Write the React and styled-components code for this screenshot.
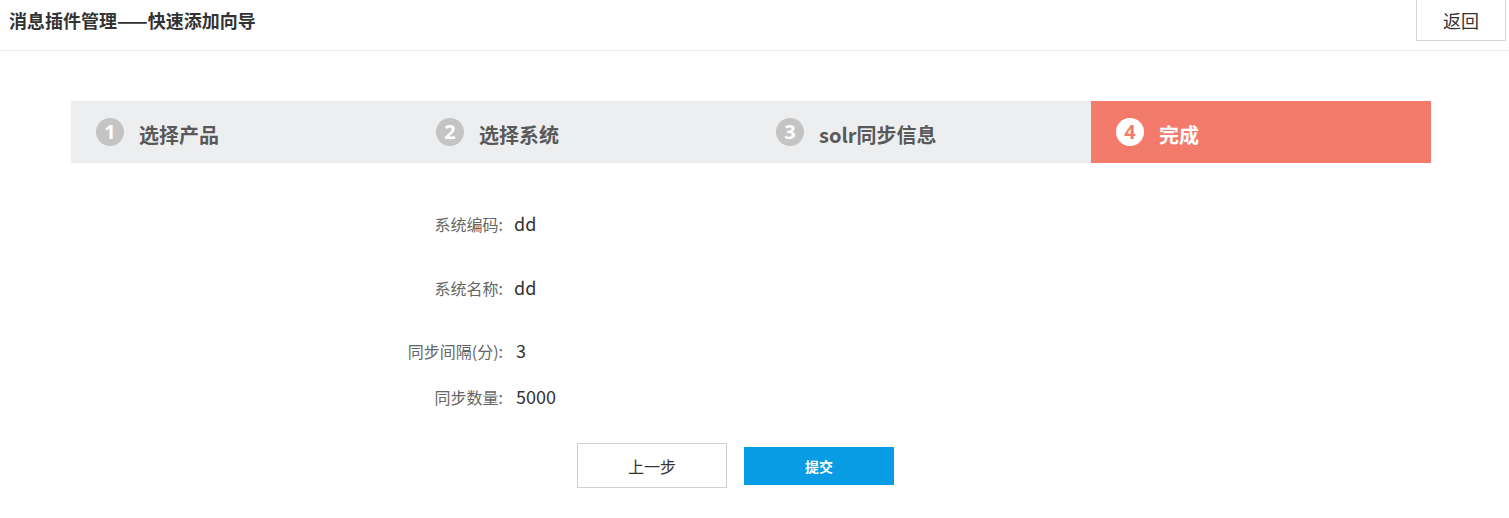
import React from 'react';
import styled, { createGlobalStyle } from 'styled-components';

const GlobalStyle = createGlobalStyle`
  * { box-sizing: border-box; }
  body {
    margin: 0;
    background: #fff;
    font-family: "Noto Sans CJK SC", "Noto Sans", sans-serif;
    color: #333;
  }
`;

const steps = [
  { num: 1, title: '选择产品' },
  { num: 2, title: '选择系统' },
  { num: 3, title: 'solr同步信息' },
  { num: 4, title: '完成', active: true },
];

const fields = [
  { label: '系统编码:', value: 'dd', after: 24 },
  { label: '系统名称:', value: 'dd', after: 23 },
  { label: '同步间隔(分):', value: '3', after: 6, shift: 2 },
  { label: '同步数量:', value: '5000', after: 0, shift: 2 },
];

const App = () => {
  return (
    <Page>
      <GlobalStyle />
      <Header>
        <Title>消息插件管理——快速添加向导</Title>
        <BackButton>返回</BackButton>
      </Header>
      <Content>
        <StepBar>
          {steps.map((s) => (
            <Step key={s.num} $active={s.active}>
              <StepNum $active={s.active}>{s.num}</StepNum>
              <StepTitle>{s.title}</StepTitle>
            </Step>
          ))}
        </StepBar>
        <Form>
          {fields.map((f) => (
            <Row key={f.label} $after={f.after}>
              <Label>{f.label}</Label>
              <Value $shift={f.shift || 0}>{f.value}</Value>
            </Row>
          ))}
        </Form>
        <Actions>
          <PrevButton>上一步</PrevButton>
          <SubmitButton>提交</SubmitButton>
        </Actions>
      </Content>
    </Page>
  );
};
export default App;

const Page = styled.div`
  width: 1509px;
  min-height: 518px;
`;

const Header = styled.div`
  height: 51px;
  display: flex;
  justify-content: space-between;
  align-items: flex-start;
  padding: 0 3px 0 9px;
  border-bottom: 1px solid #ebebeb;
`;

const Title = styled.h1`
  margin: 0;
  font-size: 18px;
  font-weight: 700;
  line-height: 41px;
  color: #333;
`;

const BackButton = styled.button`
  width: 90px;
  height: 42px;
  margin-top: -1px;
  background: #fff;
  border: 1px solid #d6d6d6;
  font-family: inherit;
  font-size: 18px;
  color: #333;
  cursor: pointer;
`;

const Content = styled.div`
  padding: 50px 78px 0 71px;
`;

const StepBar = styled.div`
  display: grid;
  grid-template-columns: repeat(4, 1fr);
  height: 62px;
  background: #edeef0;
`;

const Step = styled.div`
  display: flex;
  align-items: center;
  gap: 15px;
  padding-left: 25px;
  background: ${(p) => (p.$active ? '#f47a6c' : 'transparent')};
  color: ${(p) => (p.$active ? '#fff' : '#595959')};
`;

const StepNum = styled.span`
  width: 28px;
  height: 28px;
  border-radius: 50%;
  display: flex;
  align-items: center;
  justify-content: center;
  background: ${(p) => (p.$active ? '#fff' : '#c4c4c4')};
  color: ${(p) => (p.$active ? '#f47a6c' : '#fff')};
  font-family: "Open Sans", "Noto Sans", sans-serif;
  font-weight: 700;
  font-size: 20px;
  line-height: 1;
`;

const StepTitle = styled.span`
  font-size: 20px;
  font-weight: 700;
  line-height: 1;
  margin-top: 6px;
`;

const Form = styled.div`
  margin-top: 41px;
`;

const Row = styled.div`
  display: grid;
  grid-template-columns: 432px auto;
  align-items: center;
  height: 40px;
  margin-bottom: ${(p) => p.$after}px;
`;

const Label = styled.span`
  text-align: right;
  font-size: 16px;
  color: #666;
`;

const Value = styled.span`
  padding-left: ${(p) => 11 + p.$shift}px;
  font-size: 18px;
  color: #333;
  margin-top: -2px;
`;

const Actions = styled.div`
  display: flex;
  align-items: center;
  gap: 17px;
  margin-top: 26px;
  padding-left: 506px;
`;

const PrevButton = styled.button`
  width: 150px;
  height: 45px;
  background: #fff;
  border: 1px solid #cfcfcf;
  font-family: inherit;
  font-size: 16px;
  color: #333;
  cursor: pointer;
`;

const SubmitButton = styled.button`
  width: 150px;
  height: 38px;
  background: #079ce4;
  border: none;
  font-family: inherit;
  font-size: 14px;
  font-weight: 700;
  color: #fff;
  cursor: pointer;
`;
